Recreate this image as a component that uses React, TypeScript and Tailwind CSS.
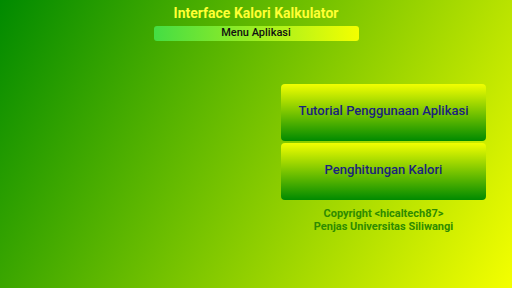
import React from "react";

export default function App() {
  return (
    <div
      className="w-[512px] h-[288px] overflow-hidden flex flex-col items-center bg-[linear-gradient(119.4deg,#008a00,#f4ff00)]"
      style={{ fontFamily: "Roboto, 'Liberation Sans', sans-serif" }}
    >
      <div className="mt-[5px] text-[14px] leading-[17px] font-bold text-[#ffff33]">
        Interface Kalori Kalkulator
      </div>
      <div className="mt-[4px] w-[205px] h-[15px] rounded-[3px] bg-[linear-gradient(to_right,#44dd44,#f4ff00)] flex items-center justify-center text-[11px] font-medium text-[#111]">
        Menu Aplikasi
      </div>
      <div className="w-full flex flex-1">
        <div className="flex-1" />
        <div className="w-[205px] mr-[26px] mt-[43px] flex flex-col gap-[2px]">
          <div className="h-[57px] pb-[4px] rounded-[4px] bg-[linear-gradient(to_bottom,#f2ff00,#008a00)] flex items-center justify-center text-[13px] font-medium text-[#1a237e]">
            Tutorial Penggunaan Aplikasi
          </div>
          <div className="h-[57px] pb-[4px] rounded-[4px] bg-[linear-gradient(to_bottom,#f2ff00,#008a00)] flex items-center justify-center text-[13px] font-medium text-[#1a237e]">
            Penghitungan Kalori
          </div>
          <div className="mt-[5px] flex flex-col items-center text-[11px] leading-[13px] font-bold text-[#2e8b00]">
            <div>Copyright &lt;hicaltech87&gt;</div>
            <div>Penjas Universitas Siliwangi</div>
          </div>
        </div>
      </div>
    </div>
  );
}
